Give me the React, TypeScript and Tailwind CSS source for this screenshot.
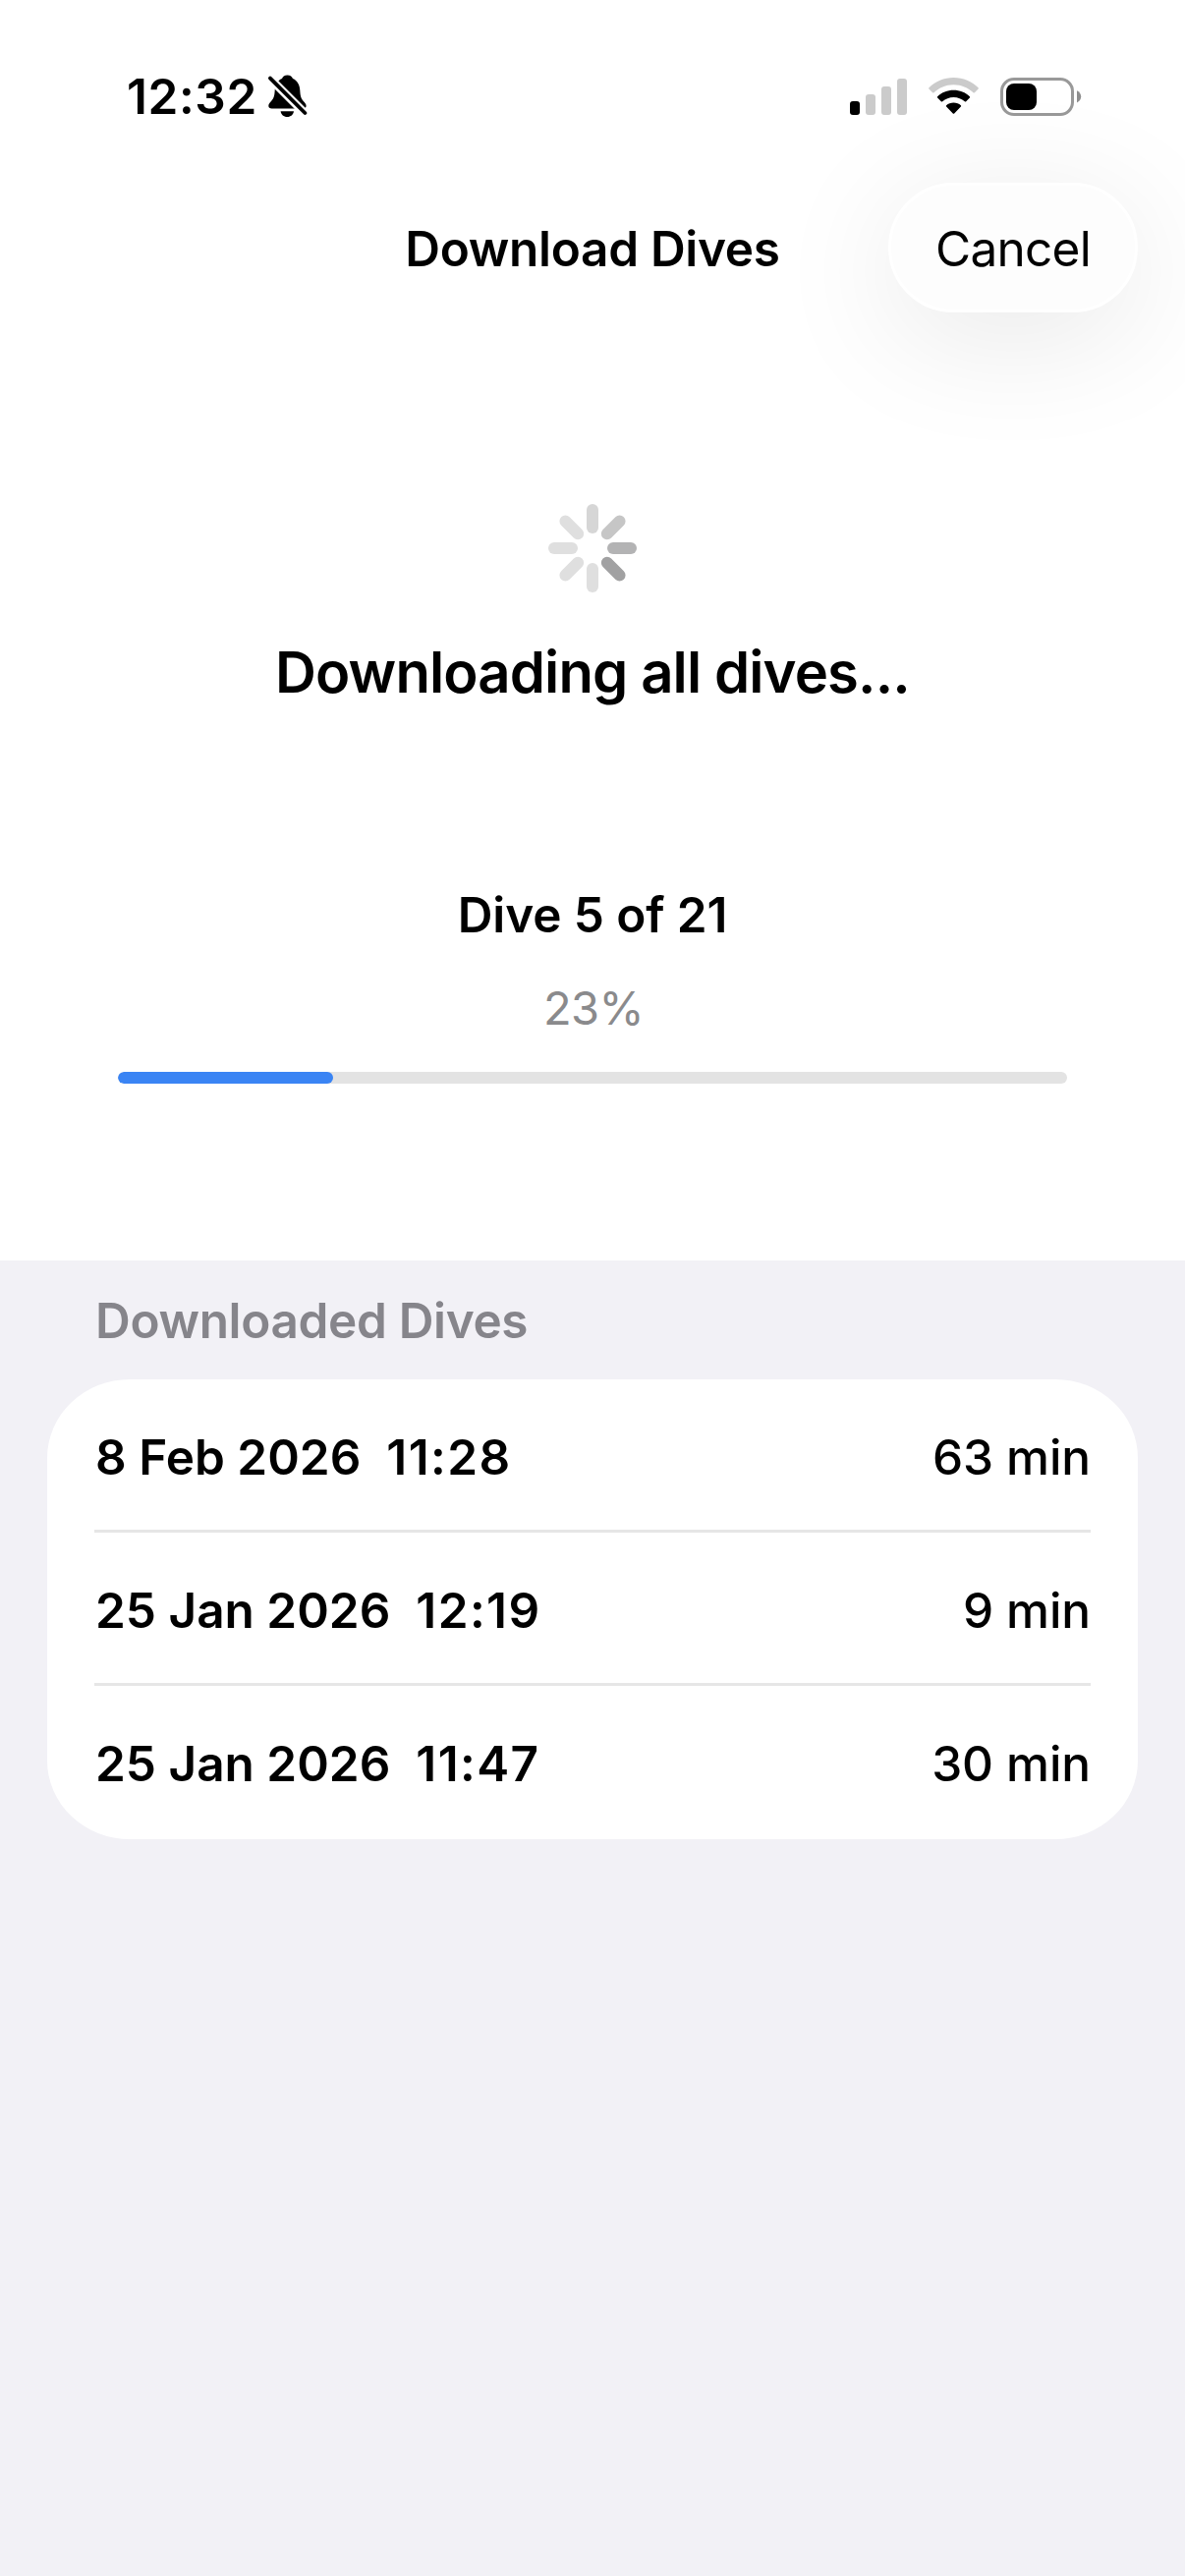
interface Dive {
  id: string
  date: string
  time: string
  duration: string
}

const dives: Dive[] = [
  { id: '1', date: '8 Feb 2026', time: '11:28', duration: '63 min' },
  { id: '2', date: '25 Jan 2026', time: '12:19', duration: '9 min' },
  { id: '3', date: '25 Jan 2026', time: '11:47', duration: '30 min' },
]

// Clockwise from the top
const spokes = ['#d6d6d6', '#c6c6c6', '#b3b3b4', '#a1a1a2', '#dfdfdf', '#dfdfdf', '#dfdfdf', '#dfdfdf']

function BellSlash() {
  return (
    <svg className="w-10 h-11" viewBox="0 0 40 44">
      <path
        d="M19.5 0.5C16.5 0.5 14.6 2.1 14 4C9.2 6 7 10.5 6.7 16C6.4 22 5.4 24.5 3 27C1.3 28.8 0.3 30 0.3 31.7C0.3 33.5 1.6 34.5 3.6 34.5H35C37.2 34.5 38.6 33.5 38.6 31.7C38.6 30 37.5 28.8 35.8 27C33.5 24.5 32.6 22 32.3 16C32 10.5 29.7 6 25 4C24.3 2.1 22.5 0.5 19.5 0.5Z"
      />
      <path d="M12.6 37.2H26C25.6 40.6 22.9 43 19.3 43C15.7 43 13 40.6 12.6 37.2Z" />
      <path d="M-1 1L40 42" stroke="white" strokeWidth="8.5" />
      <path d="M2 3.6L37.4 39" stroke="black" strokeWidth="3.8" strokeLinecap="round" />
    </svg>
  )
}

function Signal() {
  return (
    <svg className="w-[58px] h-[37px]" viewBox="0 0 58 37">
      <rect x="0" y="23" width="10" height="14" rx="3" fill="#000" />
      <rect x="16" y="16" width="10" height="21" rx="3" fill="#cbcbcb" />
      <rect x="32" y="8" width="10" height="29" rx="3" fill="#cbcbcb" />
      <rect x="48" y="0" width="10" height="37" rx="3" fill="#cbcbcb" />
    </svg>
  )
}

function Wifi() {
  return (
    <svg className="w-[51px] h-[38px]" viewBox="0 0 51 38">
      <path d="M25.5 0C35.3 0 44.2 3.9 50.6 10.2C51 10.6 51 11.2 50.6 11.6L46.9 15.3C46.5 15.7 45.9 15.7 45.5 15.3C40.3 10.3 33.3 7.3 25.5 7.3C17.7 7.3 10.7 10.3 5.5 15.3C5.1 15.7 4.5 15.7 4.1 15.3L0.4 11.6C0 11.2 0 10.6 0.4 10.2C6.8 3.9 15.7 0 25.5 0Z" fill="#cbcbcb" />
      <path d="M25.5 12.8C31.8 12.8 37.6 15.2 41.9 19.2C42.3 19.6 42.3 20.2 41.9 20.6L38.2 24.3C37.8 24.7 37.2 24.7 36.8 24.3C33.8 21.6 29.8 20 25.5 20C21.2 20 17.2 21.6 14.2 24.3C13.8 24.7 13.2 24.7 12.8 24.3L9.1 20.6C8.7 20.2 8.7 19.6 9.1 19.2C13.4 15.2 19.2 12.8 25.5 12.8Z" />
      <path d="M25.5 25.5C28.4 25.5 31 26.5 32.9 28.2C33.3 28.6 33.3 29.2 32.9 29.6L26.2 36.4C25.8 36.8 25.2 36.8 24.8 36.4L18.1 29.6C17.7 29.2 17.7 28.6 18.1 28.2C20 26.5 22.6 25.5 25.5 25.5Z" />
    </svg>
  )
}

function Battery() {
  return (
    <svg className="w-[83px] h-[39px]" viewBox="0 0 83 39">
      <rect x="1.5" y="1.5" width="72" height="36" rx="12.5" fill="none" stroke="#999" strokeWidth="3" />
      <rect x="6" y="6" width="31" height="27" rx="8" />
      <path d="M78 13.2C80.5 14.3 82.2 16.7 82.2 19.3C82.2 22 80.5 24.4 78 25.4Z" fill="#8e8e8e" />
    </svg>
  )
}

function Spinner() {
  return (
    <svg className="w-[90px] h-[90px]" viewBox="-45 -45 90 90">
      {spokes.map((color, i) => (
        <path
          key={i}
          d="M0 -39V-21"
          stroke={color}
          strokeWidth="12"
          strokeLinecap="round"
          transform={`rotate(${i * 45})`}
        />
      ))}
    </svg>
  )
}

function DiveRow({ dive }: { dive: Dive }) {
  return (
    <li className="h-[156px] pt-[5px] flex items-center justify-between border-b-[3px] border-[#e6e6e6] last:border-transparent">
      <span className="pl-px flex gap-[26px] font-semibold">
        <span>{dive.date}</span>
        <span className="tracking-[1.4px]">{dive.time}</span>
      </span>
      <span className="font-medium tracking-[-0.1px]">{dive.duration}</span>
    </li>
  )
}

export default function App() {
  const progress = 22.7

  return (
    <div className="w-[1206px] h-[2622px] flex flex-col bg-[#f2f1f6] text-black text-[49.5px] leading-[60px] font-['Inter',sans-serif] overflow-hidden">
      <div className="h-[1283px] shrink-0 bg-white flex flex-col">
        {/* Status bar */}
        <div className="h-[186px] pt-[10px] pl-[129px] pr-[105px] flex items-center justify-between">
          <div className="flex items-center gap-[11px]">
            <span className="font-semibold tracking-[0.6px]">12:32</span>
            <BellSlash />
          </div>
          <div className="flex items-center gap-[22px]">
            <Signal />
            <Wifi />
            <Battery />
          </div>
        </div>

        {/* Nav bar */}
        <header className="h-[132px] px-12 grid grid-cols-[254px_1fr_254px] items-center">
          <h1 className="col-start-2 pt-px text-center font-semibold tracking-[-0.3px] whitespace-nowrap">Download Dives</h1>
          <button className="h-[132px] pt-px rounded-full bg-[#fdfdfd] border-[3px] border-white shadow-[0_24px_130px_rgba(0,0,0,0.095)] tracking-[-0.7px]">
            Cancel
          </button>
        </header>

        {/* Progress */}
        <div className="pt-[195px] px-[120px] flex flex-col items-center">
          <Spinner />
          <p className="mt-[45px] text-[58px] leading-[72px] font-semibold tracking-[-0.87px]">Downloading all dives...</p>
          <p className="mt-[181px] font-semibold tracking-[-0.1px]">Dive 5 of 21</p>
          <p className="mt-[35px] pl-0.5 text-[47px] text-[#8a8a8c] tracking-[-0.6px]">23%</p>
          <div className="mt-[35px] w-full h-3 rounded-full bg-[#e3e3e3] overflow-hidden">
            <div className="h-full rounded-full bg-[#3a84f4]" style={{ width: `${progress}%` }} />
          </div>
        </div>
      </div>

      {/* Downloaded list */}
      <section className="px-12 pt-[31px]">
        <h2 className="pl-[49px] font-semibold text-[#86858b] tracking-[-0.35px]">Downloaded Dives</h2>
        <ul className="mt-[30px] px-12 bg-white rounded-[84px/80px]">
          {dives.map((dive) => (
            <DiveRow key={dive.id} dive={dive} />
          ))}
        </ul>
      </section>
    </div>
  )
}
